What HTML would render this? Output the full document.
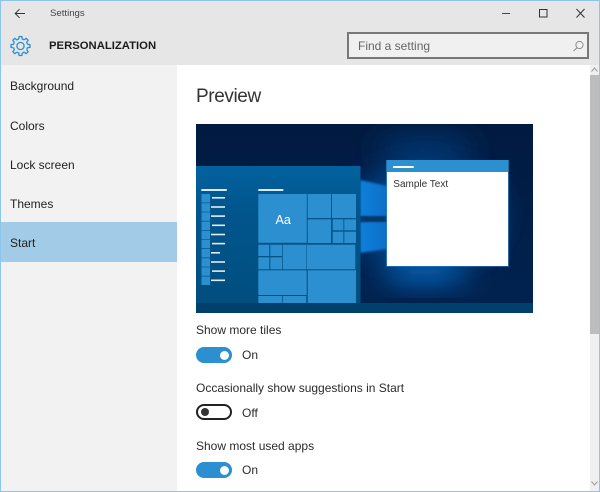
<!DOCTYPE html>
<html><head><meta charset="utf-8"><style>
html,body{margin:0;padding:0;background:#fff}
#w{position:relative;width:600px;height:492px;overflow:hidden;background:#fff;font-family:"Liberation Sans",sans-serif}
.t{position:absolute;white-space:nowrap;line-height:16px;color:#2b2b2b;font-size:12px}
.b{position:absolute}
.n{position:absolute;left:10px;font-size:12px;color:#222;line-height:16px}
</style></head><body><div id="w">
<div class="b" style="left:0;top:0;width:600px;height:65px;background:#e6e6e6"></div>
<div class="b" style="left:0;top:65px;width:177px;height:427px;background:#f2f2f2"></div>
<div class="b" style="left:0;top:222px;width:177px;height:40px;background:#a1cbe6"></div>
<div class="b" style="left:589.500px;top:65px;width:10.500px;height:427px;background:#f0f0f0"></div>
<div class="b" style="left:589.500px;top:75px;width:10.500px;height:259px;background:#bdbdbd"></div>

<div class="b" style="left:347px;top:32px;width:238px;height:23px;border:2px solid #787878;background:#f0f0f0"></div>

<svg class="b" style="left:0;top:0" width="600" height="65" fill="none">
<path d="M25 13.5H15.5M19.5 9.2L15.2 13.5L19.5 17.8" stroke="#333" stroke-width="1"/>
<path d="M502 13.5H510" stroke="#444" stroke-width="1"/>
<rect x="539.5" y="9.5" width="7.5" height="7.5" stroke="#333" stroke-width="1"/>
<path d="M576.5 9L584.5 17.5M584.5 9L576.5 17.5" stroke="#333" stroke-width="1"/>
<g stroke="#2b8fd0" stroke-width="1.3" stroke-linejoin="round" transform="translate(20.5,46)">
<circle r="3.6"/>
<path d="M-1.7 -7L-1.4 -9.5H1.4L1.7 -7L3.75 -6.15"/>
<path transform="rotate(45)" d="M-1.7 -7L-1.4 -9.5H1.4L1.7 -7L3.75 -6.15"/>
<path transform="rotate(90)" d="M-1.7 -7L-1.4 -9.5H1.4L1.7 -7L3.75 -6.15"/>
<path transform="rotate(135)" d="M-1.7 -7L-1.4 -9.5H1.4L1.7 -7L3.75 -6.15"/>
<path transform="rotate(180)" d="M-1.7 -7L-1.4 -9.5H1.4L1.7 -7L3.75 -6.15"/>
<path transform="rotate(225)" d="M-1.7 -7L-1.4 -9.5H1.4L1.7 -7L3.75 -6.15"/>
<path transform="rotate(270)" d="M-1.7 -7L-1.4 -9.5H1.4L1.7 -7L3.75 -6.15"/>
<path transform="rotate(315)" d="M-1.7 -7L-1.4 -9.5H1.4L1.7 -7L3.75 -6.15"/>
</g>
<circle cx="579.500" cy="45" r="3.6" stroke="#8c8c8c" stroke-width="1"/>
<path d="M577 47.700L573.500 51" stroke="#8c8c8c" stroke-width="1"/>
</svg>

<div class="t" style="left:50px;top:6px;font-size:9.6px;color:#444">Settings</div>
<div class="t" style="left:49px;top:38px;font-size:11.3px;font-weight:bold;color:#1c1c1c">PERSONALIZATION</div>
<div class="t" style="left:358px;top:38px;color:#666;font-size:12px">Find a setting</div>

<div class="n" style="top:78px">Background</div>
<div class="n" style="top:118px">Colors</div>
<div class="n" style="top:157px">Lock screen</div>
<div class="n" style="top:196px">Themes</div>
<div class="n" style="top:235px">Start</div>

<div class="t" style="left:196px;top:85px;font-size:19px;letter-spacing:-.4px;line-height:24px;color:#333">Preview</div>

<svg class="b" style="left:196px;top:124px" width="337" height="189" viewBox="196 124 337 189" font-family="Liberation Sans, sans-serif">
<defs>
<filter id="f1" x="-60%" y="-80%" width="220%" height="260%"><feGaussianBlur stdDeviation="14"/></filter>
<filter id="f2" x="-20%" y="-20%" width="140%" height="140%"><feGaussianBlur stdDeviation="1"/></filter>
<linearGradient id="bg" x1="0" y1="0" x2="0" y2="1"><stop offset="0" stop-color="#011a40"/><stop offset="1" stop-color="#012350"/></linearGradient>
<linearGradient id="sm" x1="0" y1="0" x2="0" y2="1"><stop offset="0" stop-color="#02629e"/><stop offset=".3" stop-color="#01568e"/><stop offset="1" stop-color="#014e7e"/></linearGradient>
<linearGradient id="pn" x1="0" y1="0" x2="1" y2="0"><stop offset="0" stop-color="#0b80dc"/><stop offset="1" stop-color="#0a6fc8"/></linearGradient>
</defs>
<rect x="196" y="124" width="337" height="189" fill="url(#bg)"/>
<ellipse cx="425" cy="150" rx="50" ry="12" fill="#053a78" filter="url(#f1)"/>
<ellipse cx="425" cy="215" rx="75" ry="50" fill="#05478f" filter="url(#f1)"/>
<ellipse cx="425" cy="272" rx="45" ry="10" fill="#0a72d0" filter="url(#f1)"/>
<path d="M360 180L387 186V216L360 216Z" fill="url(#pn)" filter="url(#f2)"/>
<path d="M360 222H387V249L360 253Z" fill="url(#pn)" filter="url(#f2)"/>
<rect x="360" y="216.500" width="27" height="5" fill="#03386a"/>
<rect x="196" y="166" width="164.500" height="137" fill="url(#sm)"/>
<rect x="196" y="303" width="337" height="10" fill="#013f6c"/>

<rect x="201.300" y="189" width="25.500" height="2" fill="#dfe8ee"/>
<rect x="258.300" y="189" width="25" height="2" fill="#dfe8ee"/>

<g fill="#2b8fd0">
<rect x="201.500" y="194" width="8.500" height="8.500"/><rect x="201.500" y="203.200" width="8.500" height="8.500"/><rect x="201.500" y="212.300" width="8.500" height="8.500"/><rect x="201.500" y="221.500" width="8.500" height="8.500"/><rect x="201.500" y="230.700" width="8.500" height="8.500"/><rect x="201.500" y="239.800" width="8.500" height="8.500"/><rect x="201.500" y="249" width="8.500" height="8.500"/><rect x="201.500" y="258.200" width="8.500" height="8.500"/><rect x="201.500" y="267.300" width="8.500" height="8.500"/><rect x="201.500" y="276.500" width="8.500" height="8.500"/>
<rect x="258.300" y="194" width="48.500" height="48.800"/>
<rect x="307.700" y="194" width="23.300" height="24"/><rect x="332" y="194" width="24" height="24"/>
<rect x="307.700" y="219.300" width="23.300" height="23.700"/>
<rect x="332.700" y="219.300" width="10.700" height="11"/><rect x="344.300" y="219.300" width="11.700" height="11"/>
<rect x="332.700" y="231.700" width="10.700" height="11.300"/><rect x="344.300" y="231.700" width="11.700" height="11.300"/>
<rect x="258.300" y="244.700" width="11" height="11.300"/><rect x="270.300" y="244.700" width="11.700" height="11.300"/>
<rect x="258.300" y="257.300" width="11" height="12"/><rect x="270.300" y="257.300" width="11.700" height="12"/>
<rect x="282.700" y="244.700" width="23.600" height="24.600"/><rect x="306.800" y="244.700" width="48.500" height="24.600"/>
<rect x="258.300" y="270.300" width="48.400" height="24.700"/><rect x="307.700" y="270.300" width="48.300" height="32.700"/>
<rect x="258.300" y="296" width="23.700" height="7"/><rect x="282.700" y="296" width="23.600" height="7"/>
</g>
<g fill="#e4ebf0">
<rect x="212" y="197" width="13" height="1.600"/><rect x="211" y="206.200" width="14" height="1.600"/><rect x="211" y="215.300" width="14" height="1.600"/><rect x="212" y="224.500" width="13" height="1.600"/><rect x="211" y="233.700" width="14" height="1.600"/><rect x="212" y="242.800" width="13" height="1.600"/><rect x="211" y="252" width="9" height="1.600"/><rect x="211" y="261.200" width="14" height="1.600"/><rect x="212" y="270.300" width="13" height="1.600"/><rect x="211" y="279.500" width="14" height="1.600"/>
</g>
<text x="275.500" y="224" font-size="12.500" fill="#fff">Aa</text>

<rect x="386.300" y="160" width="122.400" height="106.500" fill="#2b8fd0"/>
<rect x="387" y="172" width="121" height="94" fill="#fff"/>
<rect x="393" y="166" width="20.700" height="2" fill="#fff"/>
<text x="393.300" y="187" font-size="10" fill="#333">Sample Text</text>
</svg>

<div class="t" style="left:196px;top:322px">Show more tiles</div>
<div class="b" style="left:196px;top:347px;width:36px;height:16px;border-radius:8px;background:#2b8fd0"></div>
<div class="b" style="left:219.500px;top:350.500px;width:9px;height:9px;border-radius:50%;background:#fff"></div>
<div class="t" style="left:242px;top:347px">On</div>

<div class="t" style="left:196px;top:380px">Occasionally show suggestions in Start</div>
<div class="b" style="left:196px;top:404px;width:32px;height:12px;border-radius:8px;border:2px solid #222;background:#fff"></div>
<div class="b" style="left:200.500px;top:408px;width:8px;height:8px;border-radius:50%;background:#333"></div>
<div class="t" style="left:242px;top:405px">Off</div>

<div class="t" style="left:196px;top:438px">Show most used apps</div>
<div class="b" style="left:196px;top:462px;width:36px;height:16px;border-radius:8px;background:#2b8fd0"></div>
<div class="b" style="left:219.500px;top:465.500px;width:9px;height:9px;border-radius:50%;background:#fff"></div>
<div class="t" style="left:242px;top:462px">On</div>

<svg class="b" style="left:590px;top:65px" width="10" height="427" fill="none">
<path d="M1.500 6.500L4.500 3L7.500 6.500" stroke="#9a9a9a" stroke-width="1"/>
<path d="M1.500 416.500L4.500 420L7.500 416.500" stroke="#9a9a9a" stroke-width="1"/>
</svg>

<div class="b" style="left:0;top:0;width:598px;height:490px;border:1px solid #8cc5ec"></div>
</div></body></html>
